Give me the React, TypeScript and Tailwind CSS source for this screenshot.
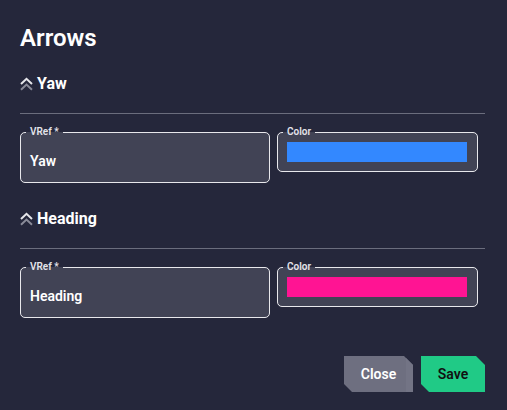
import React from "react";

function DoubleChevron() {
  return (
    <svg width="13" height="14" viewBox="0 0 13 14" className="shrink-0">
      <path d="M1 7 L6.5 1.8 L12 7" fill="none" stroke="#e6e6ea" strokeWidth="2" />
      <path d="M1 12.8 L6.5 7.6 L12 12.8" fill="none" stroke="#8a8b99" strokeWidth="2" />
    </svg>
  );
}

function Section({ name, color }: { name: string; color: string }) {
  return (
    <div className="flex flex-col">
      <div className="flex h-[20px] items-center gap-[4px] text-[16px] leading-[20px] font-bold text-white">
        <DoubleChevron />
        <span>{name}</span>
      </div>
      <div className="mt-[19px] h-px w-full bg-[#6b6d7d]" />
      <div className="mt-[12px] flex items-start gap-[7px]">
        <fieldset className="w-[250px] rounded-[5px] border border-[#e8e8ec] bg-[#414355] px-[5px] pt-[13px] pb-[11px]">
          <legend className="px-[4px] text-[10px] leading-[12px] font-semibold text-[#e4e4ea]">VRef *</legend>
          <div className="px-[4px] text-[14px] leading-[20px] font-semibold text-white">{name}</div>
        </fieldset>
        <fieldset className="w-[201px] rounded-[5px] border border-[#e8e8ec] bg-[#414355] px-[5px] pt-[4px] pb-[9px]">
          <legend className="px-[4px] text-[10px] leading-[12px] font-semibold text-[#e4e4ea]">Color</legend>
          <div className="ml-[4px] h-[20px] w-[180px]" style={{ backgroundColor: color }} />
        </fieldset>
      </div>
    </div>
  );
}

export default function App() {
  return (
    <div className="h-[410px] w-[507px] bg-[#25273b] font-['Roboto',sans-serif]">
      <div className="flex flex-col pt-[24px] pl-[20px] pr-[22px]">
        <h1 className="text-[24px] leading-[28px] font-semibold text-white">Arrows</h1>
        <div className="mt-[22px]">
          <Section name="Yaw" color="#3388ff" />
        </div>
        <div className="mt-[26px]">
          <Section name="Heading" color="#ff1493" />
        </div>
        <div className="mt-[38px] flex justify-end gap-[8px]">
          <button className="relative flex h-[36px] w-[69px] items-center justify-center bg-[#6e6f80] text-[14px] font-semibold text-white [clip-path:polygon(0_0,calc(100%-9px)_0,100%_9px,100%_100%,8px_100%,0_calc(100%-8px))]">
            <span className="absolute top-0 right-0 h-full w-[7px] bg-[#737485]" />
            <span className="relative">Close</span>
          </button>
          <button className="flex h-[36px] w-[64px] items-center justify-center bg-[#20ca86] text-[14px] font-semibold text-[#111] [clip-path:polygon(0_0,calc(100%-9px)_0,100%_9px,100%_100%,8px_100%,0_calc(100%-8px))]">
            Save
          </button>
        </div>
      </div>
    </div>
  );
}
